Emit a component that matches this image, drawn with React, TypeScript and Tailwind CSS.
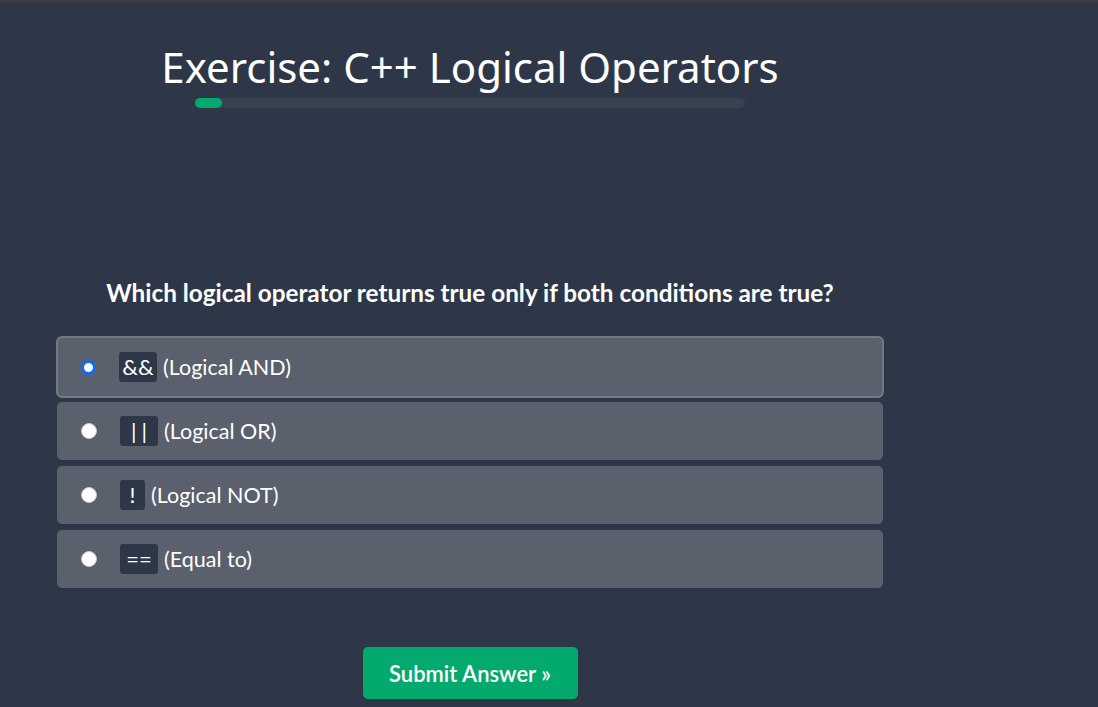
import React from "react";

const options = [
  { code: "&&", label: "(Logical AND)", selected: true, w: "w-[38px]", t: "" },
  { code: "||", label: "(Logical OR)", selected: false, w: "w-[38px]", t: "tracking-[5px] pl-[5px]" },
  { code: "!", label: "(Logical NOT)", selected: false, w: "w-[25px]", t: "" },
  { code: "==", label: "(Equal to)", selected: false, w: "w-[38px]", t: "" },
];

export default function App() {
  return (
    <div className="w-[1098px] h-[707px] overflow-hidden bg-[#2e3748] flex flex-col" style={{ fontFamily: '"Source Sans Pro", Lato, "Noto Sans", sans-serif' }}>
      <div className="h-[3px] bg-[#3a3b3f] shrink-0" />
      <div className="w-[940px] flex flex-col items-center">
        <h1 className="mt-[37px] text-white text-[42px] leading-[54px] font-normal" style={{ fontFamily: '"Noto Sans", "Open Sans", sans-serif', fontWeight: 400 }}>
          Exercise: C++ Logical Operators
        </h1>
        <div className="mt-[4px] w-[550px] h-[10px] rounded-full bg-[#374350]">
          <div className="w-[27px] h-[10px] rounded-full bg-[#04aa6d]" />
        </div>
        <p className="mt-[170px] text-white text-[24.3px] leading-[30px] font-bold">
          Which logical operator returns true only if both conditions are true?
        </p>
        <div className="mt-[28px] w-[828px] flex flex-col gap-[6px]">
          {options.map((o) => (
            <div
              key={o.label}
              className={
                o.selected
                  ? "h-[62px] -mb-[2px] rounded-[6px] bg-[#5a606c] border-[2px] border-[#737a87] flex items-center pl-[23px]"
                  : "h-[58px] mx-[1px] rounded-[5px] bg-[#5a606c] flex items-center pl-[24px]"
              }
            >
              {o.selected ? (
                <span className="w-[15px] h-[15px] rounded-full bg-white border-[3px] border-[#0b6cf7] shrink-0" />
              ) : (
                <span className="w-[16px] h-[16px] rounded-full bg-white border border-[#c8c8c8] shrink-0" />
              )}
              <span className={`ml-[23px] h-[30px] ${o.w} ${o.t} rounded-[3px] bg-[#2e3748] text-white text-[22px] leading-[30px] flex items-center justify-center shrink-0`}>
                {o.code}
              </span>
              <span className="ml-[6px] text-white text-[21.5px]">{o.label}</span>
            </div>
          ))}
        </div>
        <button className="mt-[59px] w-[215px] h-[52px] rounded-[5px] bg-[#04aa6d] text-white text-[22px] font-semibold">
          Submit Answer »
        </button>
      </div>
    </div>
  );
}
